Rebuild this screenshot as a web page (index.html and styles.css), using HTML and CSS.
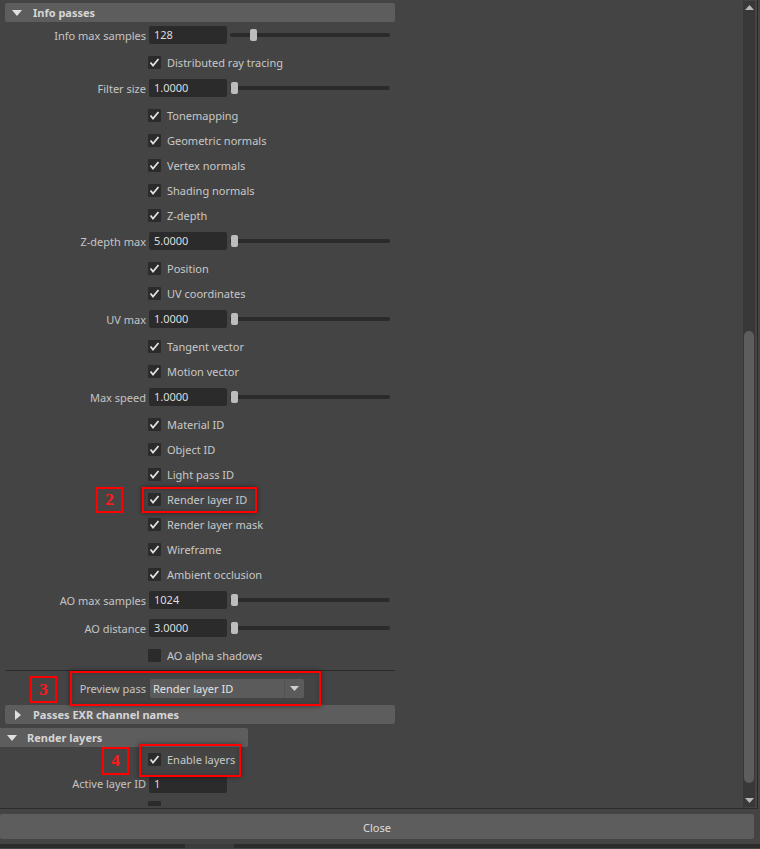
FILE: index.html
```html
<!DOCTYPE html>
<html lang="en">
	<head>
		<meta charset="UTF-8" />
		<title>Render Settings - Passes</title>
		<link rel="stylesheet" href="styles.css">
	</head>
	<body>
		<div class="window">
			<div class="panel">
				<div class="content">
					<div class="frame-header open wide">
						<svg class="arrow" width="10" height="6" viewBox="0 0 10 6"><polygon points="0,0 10,0 5,6" /></svg>
						<span>Info passes</span>
					</div>

					<div class="row num">
						<label>Info max samples</label>
						<div class="field">128</div>
						<div class="slider"><div class="handle" style="left: 20px"></div></div>
					</div>
					<div class="row check"><span class="box on"></span><span>Distributed ray tracing</span></div>
					<div class="row num">
						<label>Filter size</label>
						<div class="field">1.0000</div>
						<div class="slider"><div class="handle" style="left: 1px"></div></div>
					</div>
					<div class="row check"><span class="box on"></span><span>Tonemapping</span></div>
					<div class="row check"><span class="box on"></span><span>Geometric normals</span></div>
					<div class="row check"><span class="box on"></span><span>Vertex normals</span></div>
					<div class="row check"><span class="box on"></span><span>Shading normals</span></div>
					<div class="row check"><span class="box on"></span><span>Z-depth</span></div>
					<div class="row num">
						<label>Z-depth max</label>
						<div class="field">5.0000</div>
						<div class="slider"><div class="handle" style="left: 1px"></div></div>
					</div>
					<div class="row check"><span class="box on"></span><span>Position</span></div>
					<div class="row check"><span class="box on"></span><span>UV coordinates</span></div>
					<div class="row num">
						<label>UV max</label>
						<div class="field">1.0000</div>
						<div class="slider"><div class="handle" style="left: 1px"></div></div>
					</div>
					<div class="row check"><span class="box on"></span><span>Tangent vector</span></div>
					<div class="row check"><span class="box on"></span><span>Motion vector</span></div>
					<div class="row num">
						<label>Max speed</label>
						<div class="field">1.0000</div>
						<div class="slider"><div class="handle" style="left: 1px"></div></div>
					</div>
					<div class="row check"><span class="box on"></span><span>Material ID</span></div>
					<div class="row check"><span class="box on"></span><span>Object ID</span></div>
					<div class="row check"><span class="box on"></span><span>Light pass ID</span></div>
					<div class="row check"><span class="box on"></span><span>Render layer ID</span></div>
					<div class="row check"><span class="box on"></span><span>Render layer mask</span></div>
					<div class="row check"><span class="box on"></span><span>Wireframe</span></div>
					<div class="row check"><span class="box on"></span><span>Ambient occlusion</span></div>
					<div class="row num">
						<label>AO max samples</label>
						<div class="field">1024</div>
						<div class="slider"><div class="handle" style="left: 1px"></div></div>
					</div>
					<div class="row num">
						<label>AO distance</label>
						<div class="field">3.0000</div>
						<div class="slider"><div class="handle" style="left: 1px"></div></div>
					</div>
					<div class="row check"><span class="box"></span><span>AO alpha shadows</span></div>

					<div class="separator"></div>

					<div class="row preview">
						<label>Preview pass</label>
						<div class="dropdown">
							<span class="dropdown-value">Render layer ID</span>
							<span class="dropdown-button">
								<svg width="9" height="5" viewBox="0 0 9 5"><polygon points="0,0 9,0 4.5,5" /></svg>
							</span>
						</div>
					</div>

					<div class="frame-header closed wide">
						<svg class="arrow" width="6" height="10" viewBox="0 0 6 10"><polygon points="0,0 6,5 0,10" /></svg>
						<span>Passes EXR channel names</span>
					</div>

					<div class="frame-header open narrow">
						<svg class="arrow" width="10" height="6" viewBox="0 0 10 6"><polygon points="0,0 10,0 5,6" /></svg>
						<span>Render layers</span>
					</div>

					<div class="row check"><span class="box on"></span><span>Enable layers</span></div>
					<div class="row num short">
						<label>Active layer ID</label>
						<div class="field">1</div>
					</div>
					<!-- next option, scrolled below the fold -->
					<div class="row check"><span class="box"></span></div>
				</div>

				<div class="scrollbar">
					<div class="sb-step">
						<svg width="9" height="5" viewBox="0 0 9 5"><polygon points="0,5 9,5 4.5,0" /></svg>
					</div>
					<div class="sb-trough"><div class="sb-thumb" style="margin-top: 317px; height: 452px"></div></div>
					<div class="sb-step">
						<svg width="9" height="5" viewBox="0 0 9 5"><polygon points="0,0 9,0 4.5,5" /></svg>
					</div>
				</div>
			</div>

			<div class="footer">
				<button class="close-button">Close</button>
			</div>
			<div class="status-strip"><span class="strip-tab"></span></div>

			<!-- step markers laid over the panel -->
			<div class="marker num-tag tag-2">2</div>
			<div class="marker outline mark-2"></div>
			<div class="marker num-tag tag-3">3</div>
			<div class="marker outline mark-3"></div>
			<div class="marker num-tag tag-4">4</div>
			<div class="marker outline mark-4"></div>
		</div>
	</body>
</html>
```

FILE: styles.css
```css
* {
	margin: 0;
	padding: 0;
	box-sizing: border-box;
}

body {
	width: 760px;
	height: 849px;
	overflow: hidden;
	background: #444444;
	font-family: "Noto Sans", "Open Sans", sans-serif;
	font-size: 11px;
	color: #c4c4c4;
}

.window {
	position: relative;
	height: 849px;
}

/* scrolled settings panel */

.panel {
	display: flex;
	width: 758px;
	height: 809px;
	padding-bottom: 2px;
	border-right: 1px solid #2b2b2b;
	border-bottom: 1px solid #2b2b2b;
}

.content {
	width: 743px;
	height: 806px;
	overflow: hidden;
	padding-top: 3px;
}

.frame-header {
	display: flex;
	align-items: center;
	height: 19px;
	background: #5d5d5d;
	border-radius: 2px;
	color: #d6d6d6;
	font-weight: bold;
}

.frame-header .arrow {
	fill: #e0e0e0;
}

.frame-header.wide {
	margin-left: 5px;
	width: 390px;
}

.frame-header.open.wide .arrow {
	margin: 0 11px 0 7px;
}

.frame-header.closed .arrow {
	margin: 0 12px 0 10px;
}

.frame-header.narrow {
	width: 248px;
	margin-top: 4px;
	border-radius: 0 2px 2px 0;
}

.frame-header.narrow .arrow {
	margin: 0 10px 0 7px;
}

.row {
	display: grid;
	grid-template-columns: 146px 78px 160px;
	column-gap: 3px;
	align-items: center;
}

.row label {
	text-align: right;
	white-space: nowrap;
}

.row.num {
	height: 28px;
	padding-bottom: 2px;
}

.row.num.short {
	height: 23px;
	padding-bottom: 0;
}

.row.check {
	display: flex;
	align-items: center;
	height: 25px;
	padding-left: 148px;
	padding-bottom: 1px;
	color: #c8c8c8;
}

.field {
	height: 18px;
	line-height: 18px;
	padding-left: 5px;
	background: #2b2b2b;
	border-radius: 2px;
	color: #dedede;
}

.slider {
	position: relative;
	height: 18px;
}

.slider::before {
	content: "";
	position: absolute;
	left: 0;
	right: 0;
	top: 7px;
	height: 4px;
	background: #2b2b2b;
	border-radius: 2px;
}

.slider .handle {
	position: absolute;
	top: 3px;
	width: 7px;
	height: 12px;
	background: #bdbdbd;
	border-radius: 2px;
}

.box {
	width: 13px;
	height: 13px;
	margin-right: 3px;
	background: #2b2b2b;
	border-radius: 1px;
}

.box.on {
	background: #2b2b2b url("data:image/svg+xml;utf8,<svg xmlns='http://www.w3.org/2000/svg' width='13' height='13'><polyline points='2.5,6.5 5,9.5 10.5,3' fill='none' stroke='%23e2e2e2' stroke-width='1.8'/></svg>") no-repeat;
}

.separator {
	margin: 2px 0 0 6px;
	width: 389px;
	height: 1px;
	background: #2a2a2a;
}

.row.preview {
	grid-template-columns: 146px 154px;
	column-gap: 4px;
	height: 34px;
}

.dropdown {
	display: flex;
	height: 19px;
	background: #5b5b5b;
	border-radius: 2px;
	color: #e2e2e2;
}

.dropdown-value {
	flex: 1;
	line-height: 19px;
	padding-left: 3px;
}

.dropdown-button {
	display: flex;
	align-items: center;
	justify-content: center;
	width: 20px;
	border-left: 1px solid #525252;
}

.dropdown-button svg {
	fill: #cfcfcf;
}

/* vertical scrollbar */

.scrollbar {
	display: flex;
	flex-direction: column;
	width: 12px;
	height: 806px;
	margin-right: 2px;
	margin-top: 1px;
	background: #383838;
}

.sb-step {
	display: flex;
	justify-content: center;
	align-items: center;
	height: 13px;
}

.sb-step svg {
	fill: #b8b8b8;
}

.sb-trough {
	flex: 1;
}

.sb-thumb {
	width: 10px;
	margin-left: 1px;
	background: #5d5d5d;
	border-radius: 5px;
}

/* dialog buttons */

.footer {
	padding-top: 5px;
}

.close-button {
	display: block;
	width: 754px;
	height: 25px;
	border: none;
	border-radius: 2px;
	background: #5d5d5d;
	color: #dcdcdc;
	font-family: inherit;
	font-size: 11px;
	padding-top: 1px;
}

.status-strip {
	margin-top: 5px;
	height: 4px;
	background: #2c2c2c;
}

.strip-tab {
	display: block;
	margin-left: 185px;
	width: 49px;
	height: 4px;
	background: #3c3c3c;
}

/* red step markers */

.marker {
	position: absolute;
	border: 2px solid #ff0000;
}

.outline {
	box-shadow: 0 0 5px rgba(0, 0, 0, 0.45), inset 0 0 4px rgba(0, 0, 0, 0.2);
}

.num-tag {
	display: flex;
	align-items: center;
	justify-content: center;
	width: 27px;
	color: #ff1a1a;
	font-family: "Liberation Serif", serif;
	font-weight: bold;
	font-size: 17px;
}

.tag-2 { left: 96px; top: 487px; height: 26px; }
.mark-2 { left: 142px; top: 487px; width: 115px; height: 26px; }
.tag-3 { left: 30px; top: 676px; height: 27px; }
.mark-3 { left: 70px; top: 671px; width: 251px; height: 35px; }
.tag-4 { left: 102px; top: 747px; height: 28px; }
.mark-4 { left: 139px; top: 744px; width: 102px; height: 33px; }
```
